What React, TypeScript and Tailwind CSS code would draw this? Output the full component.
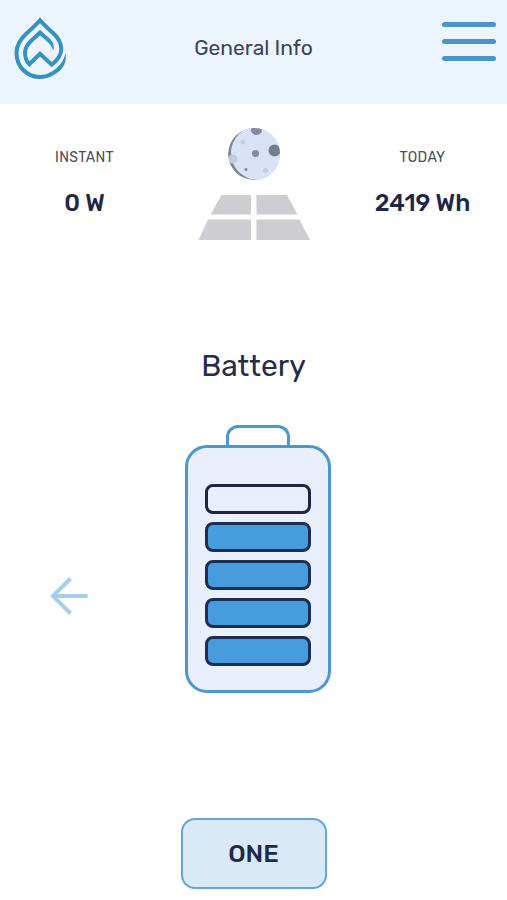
import React from "react";

function Logo() {
  return (
    <svg viewBox="0 0 52 64" className="ml-[3px] h-16 w-13" fill="none" stroke="#3592c1" aria-hidden="true">
      <path
        d="M38 57.500C34.500 59.800 30.500 61 26 61C13 61 2.500 51 2.500 37C2.500 28.500 6 23.500 12 18C17 13.500 22 9 26 4.300C30 9 34 12.500 39 17C44.500 22 47.300 26 47.300 33C47.300 39.500 43 44.500 37.700 48.700L26 37.800L15.300 48.300C12.500 45.500 11 41 11 36.500C11 31 13.500 28 18 24C21 21.200 23.500 19 26 16.500C28.500 19 31 21 33 22.800"
        strokeWidth="4"
      />
      <path d="M37 55.900C45 51.500 50 45 51.500 37C53.500 47 48 55.500 38.500 59.500Z" fill="#3592c1" stroke="none" />
      <path d="M34.300 21.300C39 25.500 40.500 29 39.500 34.500C37.500 30 35.500 27.500 31.600 24.300Z" fill="#3592c1" stroke="none" />
    </svg>
  );
}

function Header() {
  return (
    <header className="grid h-[104px] grid-cols-3 items-start bg-[#ecf5fd] px-[11px] pt-4">
      <Logo />
      <h1 className="justify-self-center text-[21px] leading-16 whitespace-nowrap text-[#3b4454]">General Info</h1>
      <button type="button" aria-label="Menu" className="mt-1.5 flex w-[54px] flex-col gap-3 justify-self-end">
        <span className="h-[5px] w-full rounded-full bg-[#4b95cb]" />
        <span className="h-[5px] w-full rounded-full bg-[#4b95cb]" />
        <span className="h-[5px] w-full rounded-full bg-[#4b95cb]" />
      </button>
    </header>
  );
}

function Stat({ label, value }: { label: string; value: string }) {
  return (
    <div className="flex flex-col items-center pt-6 whitespace-nowrap">
      <dt className="text-[14px] leading-5 tracking-wide text-[#4a4b55]">{label}</dt>
      <dd className="mt-5 text-[24px] leading-[30px] font-medium text-[#222645]">{value}</dd>
    </div>
  );
}

function MoonPanel() {
  return (
    <svg viewBox="0 0 112 116" className="h-[116px] w-[112px] justify-self-center" aria-hidden="true">
      <defs>
        <clipPath id="moon">
          <circle cx="56" cy="30" r="26" />
        </clipPath>
      </defs>
      <g clipPath="url(#moon)">
        <circle cx="56" cy="30" r="26" fill="#7f8797" />
        <circle cx="60" cy="29" r="27" fill="#dce2f5" />
        <ellipse cx="58.500" cy="6" rx="5.500" ry="5" fill="#858c9d" />
        <circle cx="76.500" cy="26.500" r="6" fill="#757e90" />
        <circle cx="57.500" cy="29.500" r="3.500" fill="#858c9d" />
        <circle cx="35" cy="35" r="4.500" fill="#c5cbdd" />
        <circle cx="45" cy="18" r="2.500" fill="#c9cfe1" />
        <circle cx="67.500" cy="46.500" r="2.500" fill="#c5cbdd" />
        <circle cx="48" cy="45.500" r="1.500" fill="#7f8797" />
      </g>
      <path d="M23.500 71H53V90.500H12.500Z M58.500 71H89L99.500 90.500H58.500Z M10 95.500H53V116H0.500Z M58.500 95.500H101.500L112 116H58.500Z" fill="#cecdd1" />
    </svg>
  );
}

function Battery({ level }: { level: number }) {
  return (
    <div role="img" aria-label={`Battery level ${level} of 5`} className="flex w-[146px] flex-col items-center">
      <div className="h-5 w-16 rounded-t-xl border-[3px] border-b-0 border-[#4b98cb]" />
      <div className="flex w-full flex-col gap-2 rounded-[22px] border-[3px] border-[#4b98cb] bg-[#e9f0fc] px-[17px] pt-9 pb-6">
        {[5, 4, 3, 2, 1].map((cell) => (
          <div
            key={cell}
            className={
              cell <= level
                ? "h-[30px] rounded-lg border-[3px] border-[#1c2e52] bg-[#469cdc]"
                : "h-[30px] rounded-lg border-[3px] border-[#23243f]"
            }
          />
        ))}
      </div>
    </div>
  );
}

export default function App() {
  return (
    <div className="bg-white pb-[11px] font-['Rubik','Roboto',sans-serif]">
      <Header />
      <main className="flex flex-col">
        <dl className="grid grid-cols-3 items-start pt-5">
          <Stat label="INSTANT" value="0 W" />
          <MoonPanel />
          <Stat label="TODAY" value="2419 Wh" />
        </dl>
        <h2 className="mt-[102px] text-center text-[30px] leading-12 text-[#262a4b]">Battery</h2>
        <section className="mt-[35px] grid grid-cols-[1fr_auto_1fr] items-center pl-2">
          <button type="button" aria-label="Previous" className="mt-[74px] ml-[42px] w-[38px]">
            <svg viewBox="0 0 38 38" className="size-[38px]" fill="none" stroke="#a5cdec" strokeWidth="4" aria-hidden="true">
              <path d="M37.500 19H3M20.500 1.500L3 19L20.500 36.500" />
            </svg>
          </button>
          <Battery level={4} />
        </section>
        <button
          type="button"
          className="mt-[125px] h-[71px] w-[146px] self-center rounded-[14px] border-2 border-[#64a8d5] bg-[#d9e9f8] text-[25px] font-medium text-[#202a48]"
        >
          ONE
        </button>
      </main>
    </div>
  );
}
